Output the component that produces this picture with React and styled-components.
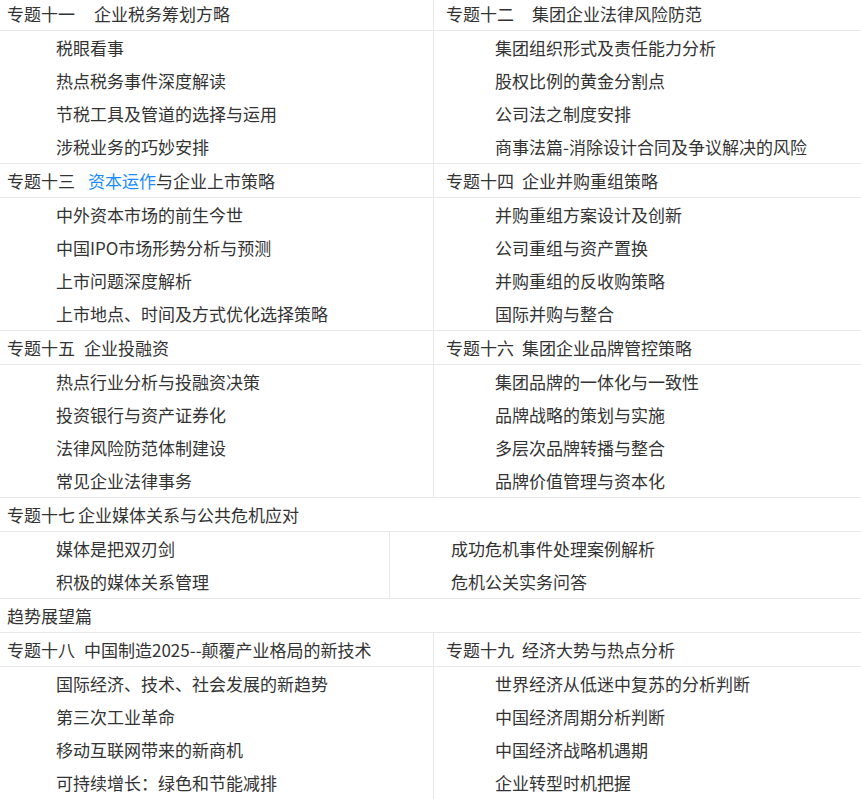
import styled, { createGlobalStyle } from "styled-components";

const GlobalStyle = createGlobalStyle`
  html, body {
    margin: 0;
    padding: 0;
    background: #fff;
  }
  body {
    font-family: "Noto Sans CJK SC", "Noto Sans", sans-serif;
    font-size: 17px;
    color: #333;
    overflow: hidden;
  }
`;

const sections = [
  [
    { label: "专题十一", gap: 19, title: "企业税务筹划方略", items: ["税眼看事", "热点税务事件深度解读", "节税工具及管道的选择与运用", "涉税业务的巧妙安排"] },
    { label: "专题十二", gap: 18, title: "集团企业法律风险防范", items: ["集团组织形式及责任能力分析", "股权比例的黄金分割点", "公司法之制度安排", "商事法篇-消除设计合同及争议解决的风险"] },
  ],
  [
    { label: "专题十三", gap: 13, link: "资本运作", title: "与企业上市策略", items: ["中外资本市场的前生今世", "中国IPO市场形势分析与预测", "上市问题深度解析", "上市地点、时间及方式优化选择策略"] },
    { label: "专题十四", gap: 8, title: "企业并购重组策略", items: ["并购重组方案设计及创新", "公司重组与资产置换", "并购重组的反收购策略", "国际并购与整合"] },
  ],
  [
    { label: "专题十五", gap: 9, title: "企业投融资", items: ["热点行业分析与投融资决策", "投资银行与资产证券化", "法律风险防范体制建设", "常见企业法律事务"] },
    { label: "专题十六", gap: 8, title: "集团企业品牌管控策略", items: ["集团品牌的一体化与一致性", "品牌战略的策划与实施", "多层次品牌转播与整合", "品牌价值管理与资本化"] },
  ],
];

const lastSection = [
  { label: "专题十八", gap: 9, title: "中国制造2025--颠覆产业格局的新技术", items: ["国际经济、技术、社会发展的新趋势", "第三次工业革命", "移动互联网带来的新商机", "可持续增长：绿色和节能减排"] },
  { label: "专题十九", gap: 8, title: "经济大势与热点分析", items: ["世界经济从低迷中复苏的分析判断", "中国经济周期分析判断", "中国经济战略机遇期", "企业转型时机把握"] },
];

const Table = styled.div`
  margin-top: -3px;
  width: 861px;
`;

const Row = styled.div`
  display: grid;
  grid-template-columns: ${(p) => p.$split || "434px"} 1fr;
  border-bottom: 1px solid #e8e8e8;
`;

const Cell = styled.div`
  display: flex;
  flex-direction: column;
  border-right: ${(p) => (p.$left ? "1px solid #e8e8e8" : "none")};
`;

const Header = styled.div`
  height: 33px;
  line-height: 33px;
  padding-left: ${(p) => p.$pad}px;
  border-bottom: 1px solid #e8e8e8;
  white-space: nowrap;
`;

const Gap = styled.span`
  display: inline-block;
  width: ${(p) => p.$w}px;
`;

const Link = styled.span`
  color: #1a8cff;
`;

const Items = styled.ul`
  list-style: none;
  margin: 0;
  padding: 0 0 0 ${(p) => p.$pad}px;
`;

const Item = styled.li`
  height: 33px;
  line-height: 33px;
  white-space: nowrap;
`;

const WideHeader = styled.div`
  height: 33px;
  line-height: 33px;
  padding-left: 7px;
  border-bottom: 1px solid #e8e8e8;
  white-space: nowrap;
`;

const Topic = ({ topic, left }) => (
  <Cell $left={left}>
    <Header $pad={left ? 7 : 12}>
      {topic.label}
      <Gap $w={topic.gap} />
      {topic.link && <Link>{topic.link}</Link>}
      {topic.title}
    </Header>
    <Items $pad={left ? 56 : 61}>
      {topic.items.map((it) => (
        <Item key={it}>{it}</Item>
      ))}
    </Items>
  </Cell>
);

const App = () => {
  return (
    <>
      <GlobalStyle />
      <Table>
        {sections.map((pair) => (
          <Row key={pair[0].label}>
            <Topic topic={pair[0]} left />
            <Topic topic={pair[1]} />
          </Row>
        ))}
        <WideHeader>
          专题十七<Gap $w={3} />企业媒体关系与公共危机应对
        </WideHeader>
        <Row $split="390px">
          <Cell $left>
            <Items $pad={56}>
              <Item>媒体是把双刃剑</Item>
              <Item>积极的媒体关系管理</Item>
            </Items>
          </Cell>
          <Cell>
            <Items $pad={61}>
              <Item>成功危机事件处理案例解析</Item>
              <Item>危机公关实务问答</Item>
            </Items>
          </Cell>
        </Row>
        <WideHeader>趋势展望篇</WideHeader>
        <Row>
          <Topic topic={lastSection[0]} left />
          <Topic topic={lastSection[1]} />
        </Row>
      </Table>
    </>
  );
};

export default App;
